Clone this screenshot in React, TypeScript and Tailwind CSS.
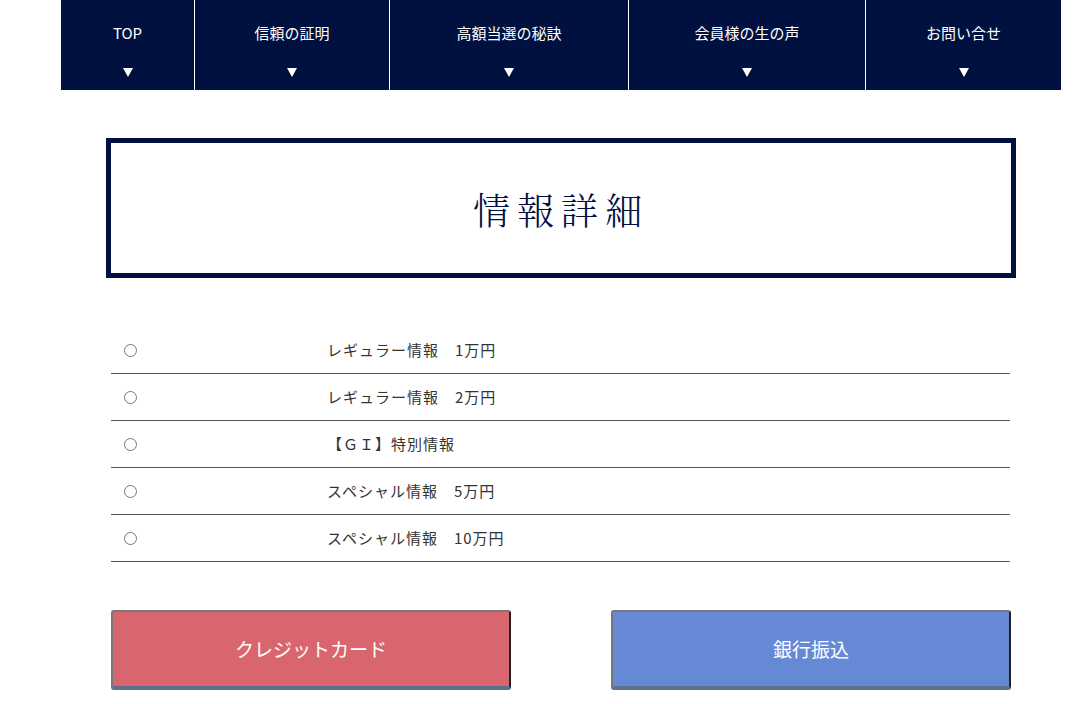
const nav = [
  { label: "TOP", w: "w-[133px]" },
  { label: "信頼の証明", w: "w-[195px]" },
  { label: "高額当選の秘訣", w: "w-[239px]" },
  { label: "会員様の生の声", w: "w-[237px]" },
  { label: "お問い合せ", w: "w-[196px]" },
];

const options = [
  "レギュラー情報　1万円",
  "レギュラー情報　2万円",
  "【ＧＩ】特別情報",
  "スペシャル情報　5万円",
  "スペシャル情報　10万円",
];

export default function App() {
  return (
    <div className="min-h-[704px] bg-white font-['Noto_Sans_CJK_JP','Noto_Sans',sans-serif]">
      <nav className="ml-[61px] flex h-[90px] w-[1000px] bg-[#00103f] text-white">
        {nav.map((item, i) => (
          <div
            key={item.label}
            className={`${item.w} ${i > 0 ? "border-l border-white" : ""} flex flex-col items-center pt-[22px] text-[15px]`}
          >
            <span className="leading-[22px]">{item.label}</span>
            <span className="mt-[24px] block h-0 w-0 border-x-[5px] border-t-[9px] border-x-transparent border-t-white" />
          </div>
        ))}
      </nav>

      <div className="ml-[106px] mt-[48px] flex h-[140px] w-[910px] items-center justify-center border-[5px] border-[#00103f]">
        <h1 className="pt-[3px] text-[37px] font-light tracking-[7px] text-[#00103f] font-['Noto_Serif_CJK_JP','Noto_Sans_CJK_JP',serif]">
          情報詳細
        </h1>
      </div>

      <ul className="ml-[111px] mt-[49px] w-[899px]">
        {options.map((o) => (
          <li key={o} className="flex h-[47px] items-center border-b border-[#555] text-[15px] text-[#333]">
            <span className="ml-[13px] block h-[13px] w-[13px] rounded-full border border-[#777]" />
            <span className="ml-[190px] tracking-[1px]">{o}</span>
          </li>
        ))}
      </ul>

      <div className="ml-[111px] mt-[48px] flex gap-[100px]">
        <button className="flex h-[80px] w-[400px] items-center justify-center rounded-[3px] border-2 border-b-4 border-[#777] border-r-[#222] border-b-[#5f6f90] bg-[#d9656f] text-[19px] text-white">
          クレジットカード
        </button>
        <button className="flex h-[80px] w-[400px] items-center justify-center rounded-[3px] border-2 border-b-4 border-[#777] border-r-[#222] border-b-[#5f6f90] bg-[#6689d6] text-[19px] text-white">
          銀行振込
        </button>
      </div>
    </div>
  );
}
